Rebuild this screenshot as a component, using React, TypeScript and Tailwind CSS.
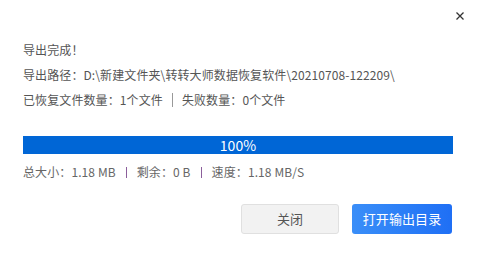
import React from 'react';

const font = { fontFamily: '"Noto Sans CJK SC", "Noto Sans", sans-serif' };

const App: React.FC = () => {
  return (
    <div className="relative w-[478px] h-[254px] bg-white text-[12px] text-[#555] tracking-[0.1px]" style={font}>
      <button className="absolute right-[12px] top-[10px] w-[12px] h-[12px] flex items-center justify-center text-[#333]">
        <svg width="8" height="8" viewBox="0 0 8 8" fill="none" stroke="currentColor" strokeWidth="1.3">
          <path d="M0.5 0.5l7 7M7.5 0.5l-7 7" />
        </svg>
      </button>

      <div className="pt-[37px] pl-[23px] pr-[25px]">
        <div className="leading-[25px]">
          <p>导出完成！</p>
          <p>导出路径：D:\新建文件夹\转转大师数据恢复软件\20210708-122209\</p>
          <p className="flex items-center">
            <span>已恢复文件数量：1个文件</span>
            <span className="mx-[9px] w-px h-[14px] bg-[#999]"></span>
            <span>失败数量：0个文件</span>
          </p>
        </div>

        <div className="mt-[24px] h-[18px] w-[430px] bg-[#0066d6] flex items-center justify-center text-white text-[14px] leading-none">
          100%
        </div>

        <div className="mt-[8px] leading-[20px] flex items-center text-[#666]">
          <span>总大小：1.18 MB</span>
          <span className="mx-[10px] w-px h-[11px] bg-[#8b5e9b]"></span>
          <span>剩余：0 B</span>
          <span className="mx-[10px] w-px h-[11px] bg-[#8b5e9b]"></span>
          <span>速度：1.18 MB/S</span>
        </div>
      </div>

      <div className="mt-[22px] pr-[26px] flex justify-end gap-[13px]">
        <button className="w-[98px] h-[30px] rounded-[3px] bg-[#f2f2f2] border border-[#e0e0e0] text-[#555] text-[13px]">
          关闭
        </button>
        <button className="w-[100px] h-[30px] rounded-[3px] bg-gradient-to-r from-[#3a8ef8] to-[#1f6ff5] text-white text-[13px]">
          打开输出目录
        </button>
      </div>
    </div>
  );
};

export default App;
